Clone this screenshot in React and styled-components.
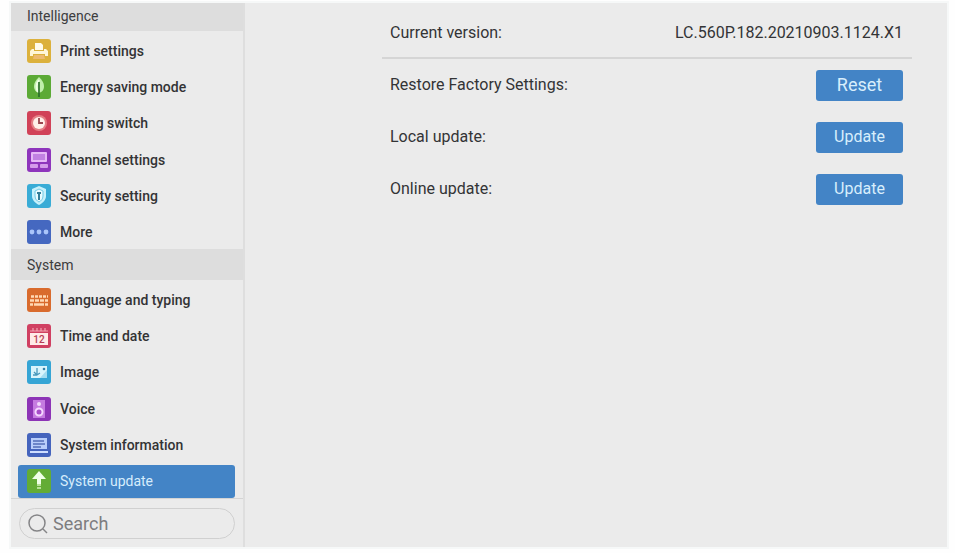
import React from "react";
import styled, { createGlobalStyle } from "styled-components";

const GlobalStyle = createGlobalStyle`
  * { box-sizing: border-box; }
  body {
    margin: 0;
    background: #fefefe;
    color: #333436;
    font-family: Roboto, "Liberation Sans", sans-serif;
    font-size: 14px;
  }
`;

const Window = styled.div`
  display: flex;
  min-height: calc(100vh - 9px);
  margin: 3px 8px 6px 11px;
  background: #ebebeb;
  box-shadow: 0 0 0 2px #f6f8f8;
`;

const Sidebar = styled.nav`
  display: flex;
  flex-direction: column;
  flex: 0 0 234px;
  min-width: 0;
  border-right: 2px solid #dedede;
`;

const Group = styled.section`
  display: flex;
  flex-direction: column;
  flex: 1 1 auto;
`;

const GroupTitle = styled.h2`
  margin: 0;
  padding: ${(p) => (p.$first ? "3px 16px 5px" : "6px 16px 5px")};
  background: #dddddd;
  color: #3c3c3e;
  font-size: 14px;
  line-height: 20px;
  font-weight: 400;
`;

const ItemList = styled.ul`
  display: grid;
  grid-auto-rows: minmax(36px, 1fr);
  align-items: end;
  flex: 1;
  margin: 0;
  padding: 0 8px 0 7px;
  list-style: none;
`;

const ItemLink = styled.a`
  display: flex;
  align-items: center;
  gap: 9px;
  height: 33px;
  padding: 0 9px;
  border-radius: 3px;
  background: ${(p) => (p.$active ? "#4384c6" : "transparent")};
  color: ${(p) => (p.$active ? "#d6edfc" : "#333335")};
  font-weight: ${(p) => (p.$active ? 400 : 500)};
  text-decoration: none;
  white-space: nowrap;
`;

const IconSvg = styled.svg`
  width: 24px;
  height: 24px;
  flex: none;
  border-radius: 3px;
  background: ${(p) => p.$tone};
`;

const SearchArea = styled.div`
  padding: 9px 8px 8px;
  border-top: 1px solid #d4d4d4;
`;

const SearchBox = styled.label`
  display: flex;
  align-items: center;
  gap: 5px;
  height: 31px;
  padding: 0 8px;
  border: 1px solid #d0d0d0;
  border-radius: 16px;
`;

const SearchIcon = styled.svg`
  width: 20px;
  height: 20px;
  flex: none;
  fill: none;
  stroke: #858587;
  stroke-width: 1.5;
`;

const SearchInput = styled.input`
  width: 100%;
  min-width: 0;
  flex: 1;
  padding: 0;
  border: 0;
  outline: 0;
  background: transparent;
  color: #444;
  font: inherit;
  font-size: 18px;
  line-height: 24px;
  &::placeholder { color: #7d7d7f; opacity: 1; }
`;

const Content = styled.main`
  flex: 1;
  min-width: 0;
  padding: 6px 35px 24px 137px;
`;

const SettingRow = styled.div`
  display: flex;
  align-items: center;
  justify-content: space-between;
  gap: 16px;
  height: 52px;
  padding: 0 9px 0 8px;
  font-size: 16px;
  line-height: 24px;
`;

const VersionRow = styled(SettingRow)`
  height: 50px;
  border-bottom: 2px solid #d5d5d5;
`;

const ActionButton = styled.button`
  width: 87px;
  height: 31px;
  padding: 0;
  border: 0;
  border-radius: 3px;
  background: #4384c6;
  color: #d8eefc;
  font: inherit;
  font-size: ${(p) => (p.$large ? "18px" : "16px")};
  cursor: pointer;
`;

const glyphs = {
  print: {
    tone: "#dcb13c",
    art: (
      <>
        <path d="M8 4h6l2 2v5H8z" fill="#fffbe9" />
        <path d="M5 10h2v2h10v-2h2l2 2v5h-3v-2H6v2H3v-5z" fill="#fff6d8" />
        <path d="M7 16h10l1 4H6z" fill="#edba70" />
      </>
    ),
  },
  leaf: {
    tone: "#5caa36",
    art: (
      <>
        <path d="M12 2c3 3 5 6 5 9 0 4-2 6-5 7-3-1-5-3-5-7 0-3 2-6 5-9z" fill="#c1efac" />
        <path d="M12 5c-3 4-3 8-1 12" fill="none" stroke="#eeffe4" strokeWidth="2" />
        <path d="M12 7v15" stroke="#276b28" strokeWidth="1.6" />
      </>
    ),
  },
  clock: {
    tone: "#d14258",
    art: (
      <>
        <circle cx="12" cy="12" r="8" fill="#e57f85" />
        <circle cx="12" cy="12" r="6" fill="#fff0ea" />
        <path d="M12 7v5h4" fill="none" stroke="#9a4750" strokeWidth="1.8" />
      </>
    ),
  },
  channel: {
    tone: "#8e35bc",
    art: (
      <>
        <rect x="4" y="4" width="16" height="10" rx="1" fill="#e5b8f6" />
        <rect x="6" y="6" width="12" height="6" fill="#c181e2" />
        <rect x="3" y="16" width="8" height="4" rx="1" fill="#d49bea" />
        <rect x="13" y="16" width="8" height="4" rx="1" fill="#d49bea" />
      </>
    ),
  },
  shield: {
    tone: "#39acd6",
    art: (
      <>
        <path d="M12 2l7 3v7c0 4-3 7-7 9-4-2-7-5-7-9V5z" fill="#c7f1fb" />
        <path d="M12 5l4 2v5c0 3-2 5-4 6-2-1-4-3-4-6V7z" fill="#e9fcff" stroke="#75cbe5" />
        <path d="M12 8v8M10 9h4" stroke="#347f99" strokeWidth="2" />
      </>
    ),
  },
  more: {
    tone: "#4568c0",
    art: (
      <>
        <circle cx="5" cy="12" r="2.4" fill="#a9c5fa" />
        <circle cx="12" cy="12" r="2.4" fill="#a9c5fa" />
        <circle cx="19" cy="12" r="2.4" fill="#a9c5fa" />
      </>
    ),
  },
  keyboard: {
    tone: "#d96b2d",
    art: (
      <g stroke="#ffd9b4" strokeWidth="2.4">
        <path d="M4 8.500h17" strokeDasharray="3 1" />
        <path d="M3 12.500h18" strokeDasharray="4 1" />
        <path d="M3 16.500h3M7 16.500h10M18 16.500h3" />
      </g>
    ),
  },
  calendar: {
    tone: "#d04062",
    art: (
      <>
        <rect x="3" y="9" width="18" height="12" fill="#ffeae8" />
        <path d="M3 7h18M6 4v3M10 4v3M14 4v3M18 4v3" stroke="#f2a3b1" strokeWidth="1.2" />
        <text x="12" y="19" textAnchor="middle" fontSize="10" fontWeight="500" fill="#b63e58">12</text>
      </>
    ),
  },
  image: {
    tone: "#36a5d5",
    art: (
      <>
        <rect x="4" y="6" width="16" height="12" fill="#d9f4fc" />
        <path d="M13 18l7-8v8z" fill="#a4dcf1" />
        <circle cx="17" cy="9" r="1.3" fill="#327fa7" />
        <path d="M10 8v7M7 12l3 3 3-2M6 15h4" fill="none" stroke="#4798bc" strokeWidth="1.3" />
      </>
    ),
  },
  speaker: {
    tone: "#8d34b6",
    art: (
      <>
        <rect x="6" y="3" width="12" height="18" fill="#c57be0" />
        <circle cx="12" cy="7" r="2" fill="#f2d7fc" />
        <circle cx="12" cy="15" r="3.500" fill="#a74cc9" stroke="#f5d8ff" strokeWidth="2" />
      </>
    ),
  },
  info: {
    tone: "#4564bd",
    art: (
      <>
        <rect x="4" y="5" width="16" height="11" fill="#b8cdfa" />
        <path d="M6 8h11M6 11h12M6 14h8" stroke="#536db8" strokeWidth="1.3" />
        <path d="M3 19h18" stroke="#cfdeff" strokeWidth="2" />
      </>
    ),
  },
  update: {
    tone: "#63ac35",
    art: (
      <>
        <path d="M12 2l7 8h-5v5h-4v-5H5z" fill="#f0ffe8" />
        <path d="M10 15h4v2h-4zM10 18h4v2h-4z" fill="#b6df98" />
      </>
    ),
  },
};

const groups = [
  {
    title: "Intelligence",
    items: [
      ["print", "Print settings"],
      ["leaf", "Energy saving mode"],
      ["clock", "Timing switch"],
      ["channel", "Channel settings"],
      ["shield", "Security setting"],
      ["more", "More"],
    ],
  },
  {
    title: "System",
    items: [
      ["keyboard", "Language and typing"],
      ["calendar", "Time and date"],
      ["image", "Image"],
      ["speaker", "Voice"],
      ["info", "System information"],
      ["update", "System update"],
    ],
  },
];

const actions = [
  ["Restore Factory Settings:", "Reset"],
  ["Local update:", "Update"],
  ["Online update:", "Update"],
];

function ItemIcon({ name }) {
  const { tone, art } = glyphs[name];
  return (
    <IconSvg viewBox="0 0 24 24" $tone={tone} aria-hidden="true">
      {art}
    </IconSvg>
  );
}

export default function App() {
  return (
    <>
      <GlobalStyle />
      <Window>
        <Sidebar aria-label="Settings">
          {groups.map((group, index) => (
            <Group key={group.title}>
              <GroupTitle $first={index === 0}>{group.title}</GroupTitle>
              <ItemList>
                {group.items.map(([icon, label]) => (
                  <li key={icon}>
                    <ItemLink
                      href={`#${icon}`}
                      $active={icon === "update"}
                      aria-current={icon === "update" ? "page" : undefined}
                    >
                      <ItemIcon name={icon} />
                      <span>{label}</span>
                    </ItemLink>
                  </li>
                ))}
              </ItemList>
            </Group>
          ))}
          <SearchArea>
            <SearchBox>
              <SearchIcon viewBox="0 0 20 20" aria-hidden="true">
                <circle cx="9" cy="9" r="8" />
                <path d="M15 15l4 4" />
              </SearchIcon>
              <SearchInput type="search" placeholder="Search" aria-label="Search" />
            </SearchBox>
          </SearchArea>
        </Sidebar>
        <Content>
          <VersionRow>
            <span>Current version:</span>
            <span>LC.560P.182.20210903.1124.X1</span>
          </VersionRow>
          {actions.map(([label, action]) => (
            <SettingRow key={label}>
              <span>{label}</span>
              <ActionButton type="button" $large={action === "Reset"} aria-label={`${action} – ${label}`}>
                {action}
              </ActionButton>
            </SettingRow>
          ))}
        </Content>
      </Window>
    </>
  );
}
